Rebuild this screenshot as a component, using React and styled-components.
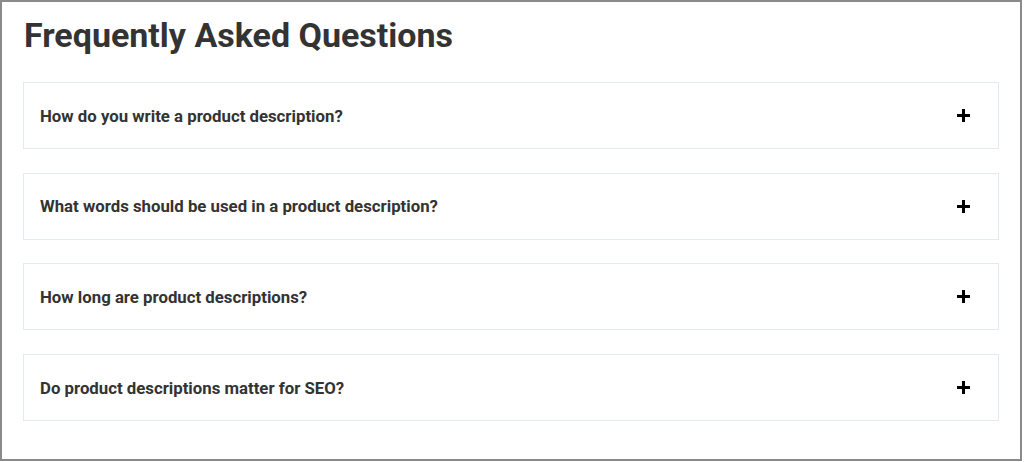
import styled, { createGlobalStyle } from 'styled-components'

const Global = createGlobalStyle`
    html, body {
        margin: 0;
        padding: 0;
        background: #fff;
    }
    * {
        box-sizing: border-box;
    }
`

const Frame = styled.div`
    width: 1022px;
    height: 461px;
    border: 2px solid #8a8a8a;
    padding: 14px 22px 0 21px;
    font-family: Roboto, "Liberation Sans", sans-serif;
    color: #333;
    background: #fff;
`

const Title = styled.h2`
    margin: 0 0 28px 1px;
    font-size: 34px;
    font-weight: 700;
    line-height: 38px;
    color: #333;
`

const List = styled.div`
    display: flex;
    flex-direction: column;
    gap: 23.7px;
    width: 976px;
`

const Item = styled.div`
    height: 67px;
    border: 1px solid #e5e9f2;
    background: #fff;
    display: flex;
    align-items: center;
    justify-content: space-between;
    padding: 0 28px 0 16px;
`

const Question = styled.span`
    font-size: 16.8px;
    font-weight: 700;
    color: #333;
`

const Plus = () => (
    <svg width="13" height="13" viewBox="0 0 13 13">
        <rect x="5" y="0" width="3" height="13" fill="#000" />
        <rect x="0" y="5" width="13" height="3" fill="#000" />
    </svg>
)

const questions = [
    'How do you write a product description?',
    'What words should be used in a product description?',
    'How long are product descriptions?',
    'Do product descriptions matter for SEO?',
]

const App = () => {
    return (
        <>
            <Global />
            <Frame>
                <Title>Frequently Asked Questions</Title>
                <List>
                    {questions.map((q) => (
                        <Item key={q}>
                            <Question>{q}</Question>
                            <Plus />
                        </Item>
                    ))}
                </List>
            </Frame>
        </>
    )
}

export default App
